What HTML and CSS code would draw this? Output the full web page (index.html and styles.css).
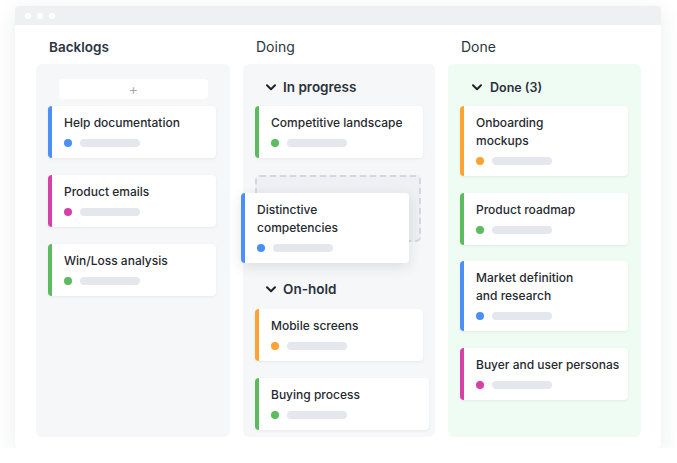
FILE: index.html
```html
<!DOCTYPE html>
<html lang="en">
<head>
    <meta charset="UTF-8">
    <title>Board</title>
    <link rel="stylesheet" href="styles.css">
</head>
<body>
    <div class="window">
        <div class="titlebar">
            <span class="dot"></span>
            <span class="dot"></span>
            <span class="dot"></span>
        </div>
        <div class="board">
            <section class="column">
                <h2 class="column-title strong">Backlogs</h2>
                <div class="panel">
                    <div class="add-btn">+</div>
                    <div class="card blue">
                        <div class="card-title">Help documentation</div>
                        <div class="card-meta"><span class="dot-tag"></span><span class="bar"></span></div>
                    </div>
                    <div class="card pink">
                        <div class="card-title">Product emails</div>
                        <div class="card-meta"><span class="dot-tag"></span><span class="bar"></span></div>
                    </div>
                    <div class="card green">
                        <div class="card-title">Win/Loss analysis</div>
                        <div class="card-meta"><span class="dot-tag"></span><span class="bar"></span></div>
                    </div>
                </div>
            </section>

            <section class="column">
                <h2 class="column-title">Doing</h2>
                <div class="panel">
                    <div class="group-head">
                        <svg class="chevron" width="10" height="7" viewBox="0 0 10 7"><polyline points="1,1.2 5,5.2 9,1.2" /></svg>
                        <span>In progress</span>
                    </div>
                    <div class="card green">
                        <div class="card-title">Competitive landscape</div>
                        <div class="card-meta"><span class="dot-tag"></span><span class="bar"></span></div>
                    </div>
                    <div class="drop-slot">
                        <div class="card blue dragging">
                            <div class="card-title">Distinctive<br>competencies</div>
                            <div class="card-meta"><span class="dot-tag"></span><span class="bar"></span></div>
                        </div>
                    </div>
                    <div class="group-head hold">
                        <svg class="chevron" width="10" height="7" viewBox="0 0 10 7"><polyline points="1,1.2 5,5.2 9,1.2" /></svg>
                        <span>On-hold</span>
                    </div>
                    <div class="card orange">
                        <div class="card-title">Mobile screens</div>
                        <div class="card-meta"><span class="dot-tag"></span><span class="bar"></span></div>
                    </div>
                    <div class="card green wide">
                        <div class="card-title">Buying process</div>
                        <div class="card-meta"><span class="dot-tag"></span><span class="bar"></span></div>
                    </div>
                </div>
            </section>

            <section class="column">
                <h2 class="column-title">Done</h2>
                <div class="panel done">
                    <div class="group-head small">
                        <svg class="chevron" width="10" height="7" viewBox="0 0 10 7"><polyline points="1,1.2 5,5.2 9,1.2" /></svg>
                        <span>Done (3)</span>
                    </div>
                    <div class="card orange">
                        <div class="card-title">Onboarding<br>mockups</div>
                        <div class="card-meta"><span class="dot-tag"></span><span class="bar"></span></div>
                    </div>
                    <div class="card green">
                        <div class="card-title">Product roadmap</div>
                        <div class="card-meta"><span class="dot-tag"></span><span class="bar"></span></div>
                    </div>
                    <div class="card blue">
                        <div class="card-title">Market definition<br>and research</div>
                        <div class="card-meta"><span class="dot-tag"></span><span class="bar"></span></div>
                    </div>
                    <div class="card pink">
                        <div class="card-title">Buyer and user personas</div>
                        <div class="card-meta"><span class="dot-tag"></span><span class="bar"></span></div>
                    </div>
                </div>
            </section>
        </div>
    </div>
</body>
</html>
```

FILE: styles.css
```css
body {
    margin: 0;
    background-color: #ffffff;
    font-family: Inter, "Open Sans", sans-serif;
    color: #262b33;
}
.window {
    width: 646px;
    height: 442px;
    margin: 6px 0 0 15px;
    background-color: white;
    border-radius: 4px;
    box-shadow: 0 6px 22px rgba(30, 40, 60, 0.09);
    display: flex;
    flex-direction: column;
    overflow: hidden;
}
.titlebar {
    height: 19px;
    background-color: #eff0f2;
    display: flex;
    align-items: center;
    gap: 6px;
    padding-left: 10px;
}
.titlebar .dot {
    width: 6px;
    height: 6px;
    border-radius: 50%;
    background-color: white;
}
.board {
    flex-grow: 1;
    display: grid;
    grid-template-columns: 194px 192px 193px;
    column-gap: 13px;
    padding: 12px 19px 11px 21px;
}
.column {
    display: flex;
    flex-direction: column;
}
.column-title {
    margin: 0 0 7px 13px;
    font-size: 14px;
    line-height: 20px;
    font-weight: 400;
    color: #2c3440;
}
.column-title.strong {
    font-size: 13.5px;
    font-weight: 600;
}
.panel {
    flex-grow: 1;
    background-color: #f6f7f8;
    border-radius: 6px;
    padding: 15px 0 0 12px;
    display: flex;
    flex-direction: column;
    align-items: flex-start;
    gap: 17px;
}
.panel.done {
    background-color: #effcf4;
    gap: 16.5px;
}
.add-btn {
    width: 149px;
    height: 20px;
    margin: 0 0 -10px 11px;
    background-color: white;
    border-radius: 4px;
    color: #a3aab4;
    font-size: 14px;
    line-height: 20px;
    text-align: center;
}
.group-head {
    display: flex;
    align-items: center;
    gap: 7px;
    height: 18px;
    margin: -1px 0 -7px 11px;
    font-size: 13.5px;
    font-weight: 600;
    color: #2a313c;
}
.group-head.hold {
    margin-top: 21px;
    margin-bottom: -6px;
}
.group-head.small {
    font-size: 12.5px;
    margin-left: 12px;
    margin-bottom: -6.5px;
    gap: 8px;
}
.chevron polyline {
    fill: none;
    stroke: #1f242b;
    stroke-width: 2;
    stroke-linecap: round;
    stroke-linejoin: round;
}
.card {
    box-sizing: border-box;
    width: 168px;
    background-color: white;
    border-radius: 4px;
    border-left: 4px solid #ccc;
    padding: 8px 6px 11px 12px;
    box-shadow: 0 1px 3px rgba(30, 40, 60, 0.07);
}
.card.wide {
    width: 174px;
}
.card-title {
    font-size: 12px;
    line-height: 18px;
    font-weight: 500;
    color: #262a30;
    white-space: nowrap;
}
.card-meta {
    display: flex;
    align-items: center;
    gap: 8px;
    margin-top: 7px;
    height: 8px;
}
.dot-tag {
    width: 8px;
    height: 8px;
    border-radius: 50%;
}
.bar {
    width: 60px;
    height: 8px;
    border-radius: 4px;
    background-color: #e4e7eb;
}
.card.blue { border-left-color: #4b8ff7; }
.card.blue .dot-tag { background-color: #4b8ff7; }
.card.pink { border-left-color: #d740a7; }
.card.pink .dot-tag { background-color: #d740a7; }
.card.green { border-left-color: #5bbb5e; }
.card.green .dot-tag { background-color: #5bbb5e; }
.card.orange { border-left-color: #fca331; }
.card.orange .dot-tag { background-color: #fca331; }
.drop-slot {
    position: relative;
    box-sizing: border-box;
    width: 166px;
    height: 67px;
    border: 2px dashed #d3d8df;
    border-radius: 5px;
    background-color: #eef0f3;
}
.card.dragging {
    position: absolute;
    top: 16px;
    left: -16px;
    box-shadow: 0 4px 14px rgba(30, 40, 60, 0.12);
}
```
